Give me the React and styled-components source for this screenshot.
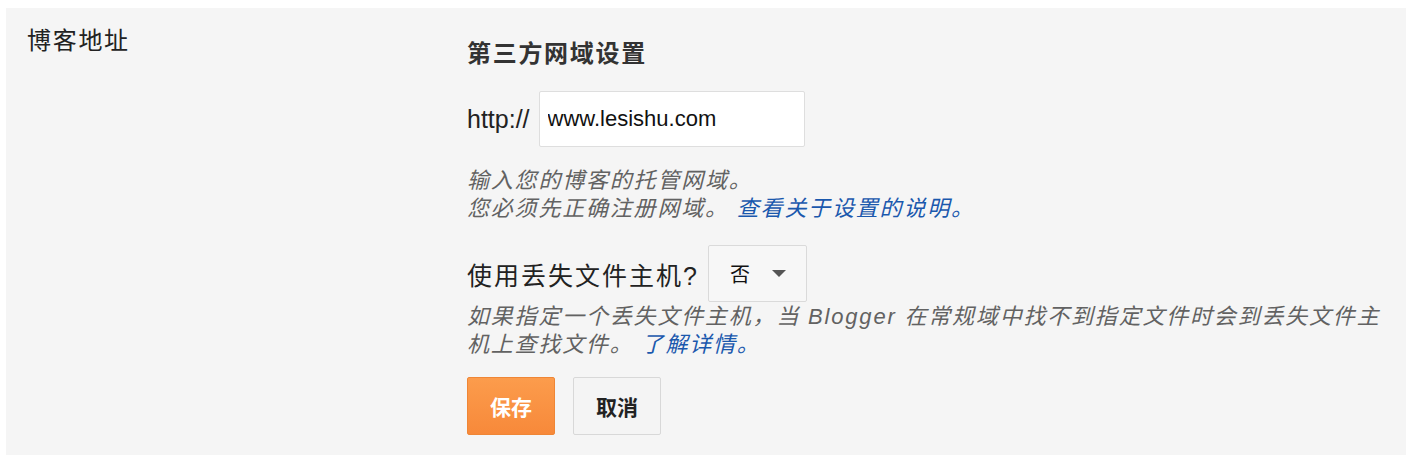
import styled, { createGlobalStyle } from "styled-components";

const GlobalStyle = createGlobalStyle`
  body {
    margin: 0;
    background: #ffffff;
    font-family: "Liberation Sans", "Noto Sans CJK SC", sans-serif;
  }
`;

const Panel = styled.div`
  margin: 8px 8px 0 6px;
  width: 1400px;
  height: 447px;
  box-sizing: border-box;
  background: #f5f5f5;
  padding: 17px 21px 0;
  display: grid;
  grid-template-columns: 440px 1fr;
`;

const SectionLabel = styled.div`
  font-size: 24px;
  line-height: 32px;
  color: #222;
  letter-spacing: 1.7px;
`;

const Form = styled.div`
  display: flex;
  flex-direction: column;
  padding-top: 13px;
`;

const Heading = styled.div`
  font-size: 24px;
  line-height: 32px;
  font-weight: bold;
  color: #333;
  letter-spacing: 1.7px;
`;

const Row = styled.div`
  display: flex;
  align-items: center;
  gap: ${(p) => p.$gap || 9}px;
  margin-top: ${(p) => p.$top || 0}px;
`;

const Prefix = styled.span`
  font-size: 25px;
  color: #222;
`;

const TextInput = styled.input`
  width: 266px;
  height: 56px;
  box-sizing: border-box;
  border: 1px solid #dedede;
  border-radius: 2px;
  background: #fff;
  padding: 0 8px;
  font-family: inherit;
  font-size: 22px;
  color: #111;
  outline: none;
`;

const Hint = styled.p`
  margin: ${(p) => p.$top || 0}px 0 0;
  font-size: 22px;
  line-height: 28px;
  font-style: italic;
  color: #626262;
  letter-spacing: 1.8px;
`;

const Link = styled.a`
  color: #1a58ad;
  text-decoration: none;
  margin-left: 8px;
`;

const Question = styled.span`
  font-size: 25px;
  color: #222;
  letter-spacing: 2px;
`;

const Select = styled.div`
  width: 99px;
  height: 57px;
  box-sizing: border-box;
  border: 1px solid #dadada;
  border-radius: 2px;
  background: #f7f7f7;
  display: flex;
  align-items: center;
  padding-left: 21px;
  gap: 22px;
  font-size: 20px;
  color: #111;
`;

const Caret = styled.span`
  width: 0;
  height: 0;
  border-left: 7px solid transparent;
  border-right: 7px solid transparent;
  border-top: 7px solid #555;
`;

const Buttons = styled.div`
  display: flex;
  gap: 18px;
  margin-top: 18px;
`;

const Button = styled.button`
  width: 88px;
  height: 58px;
  box-sizing: border-box;
  border-radius: 2px;
  font-family: inherit;
  font-size: 21px;
  font-weight: bold;
  cursor: pointer;
  border: 1px solid ${(p) => (p.$primary ? "#ef8636" : "#d8d8d8")};
  background: ${(p) =>
    p.$primary ? "linear-gradient(#fc9c4c, #f7893a)" : "#f4f4f4"};
  color: ${(p) => (p.$primary ? "#fff" : "#222")};
`;

export default function App() {
  return (
    <>
      <GlobalStyle />
      <Panel>
        <SectionLabel>博客地址</SectionLabel>
        <Form>
          <Heading>第三方网域设置</Heading>
          <Row $top={21}>
            <Prefix>http://</Prefix>
            <TextInput defaultValue="www.lesishu.com" />
          </Row>
          <Hint $top={20}>
            输入您的博客的托管网域。
            <br />
            您必须先正确注册网域。
            <Link href="#">查看关于设置的说明。</Link>
          </Hint>
          <Row $top={22}>
            <Question>使用丢失文件主机?</Question>
            <Select>
              否
              <Caret />
            </Select>
          </Row>
          <Hint $top={1}>
            如果指定一个丢失文件主机，当 Blogger 在常规域中找不到指定文件时会到丢失文件主机上查找文件。
            <Link href="#">了解详情。</Link>
          </Hint>
          <Buttons>
            <Button $primary>保存</Button>
            <Button>取消</Button>
          </Buttons>
        </Form>
      </Panel>
    </>
  );
}
